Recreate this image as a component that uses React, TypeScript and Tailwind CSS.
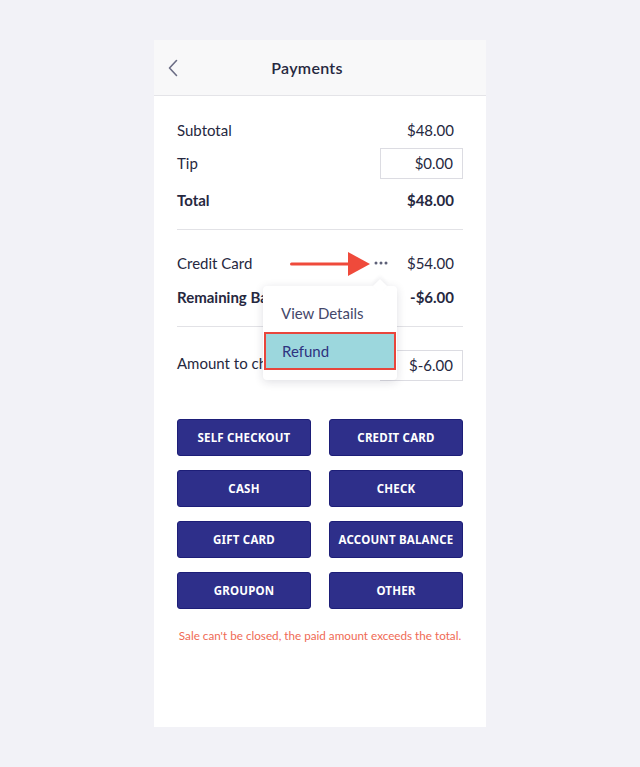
import React from "react";

const BUTTONS = [
  "SELF CHECKOUT",
  "CREDIT CARD",
  "CASH",
  "CHECK",
  "GIFT CARD",
  "ACCOUNT BALANCE",
  "GROUPON",
  "OTHER",
];

export default function App() {
  return (
    <div className="min-h-screen bg-[#f2f2f7] pt-[40px] font-['Lato','Noto_Sans',sans-serif] text-[#262840]">
      <div className="mx-auto w-[332px] h-[687px] bg-white flex flex-col">
        {/* header */}
        <div className="relative h-[56px] shrink-0 bg-[#f8f8f9] border-b border-[#e4e4e8] flex items-center justify-center pr-[26px]">
          <svg className="absolute left-[13px] top-[19px]" width="12" height="18" viewBox="0 0 12 18">
            <path d="M9.5 1.5 L2.5 9 L9.5 16.5" fill="none" stroke="#6b6d85" strokeWidth="1.6" strokeLinecap="round" strokeLinejoin="round" />
          </svg>
          <span className="text-[16px] font-semibold tracking-[0.3px]">Payments</span>
        </div>

        <div className="px-[23px] pt-[20px] flex flex-col text-[15px]">
          <div className="h-[28px] flex items-center justify-between">
            <span>Subtotal</span>
            <span className="pr-[9px]">$48.00</span>
          </div>
          <div className="mt-[4px] h-[31px] flex items-center justify-between">
            <span>Tip</span>
            <div className="w-[83px] h-[31px] border border-[#dcdce2] flex items-center justify-end pr-[9px]">$0.00</div>
          </div>
          <div className="mt-[7px] h-[28px] flex items-center justify-between font-bold">
            <span>Total</span>
            <span className="pr-[9px]">$48.00</span>
          </div>
          <div className="mt-[15px] border-t border-[#e2e2e6]" />

          <div className="relative mt-[19px] h-[28px] flex items-center justify-between">
            <span>Credit Card</span>
            <span className="pr-[9px]">$54.00</span>

            {/* annotation arrow */}
            <svg className="absolute left-[113px] top-[2px]" width="82" height="26" viewBox="0 0 82 26">
              <rect x="0" y="11.5" width="60" height="3" rx="1.5" fill="#ef4a3b" />
              <polygon points="58,1 80,13 58,25" fill="#ef4a3b" />
            </svg>
            {/* more dots */}
            <svg className="absolute left-[197px] top-[12px]" width="14" height="4" viewBox="0 0 14 4">
              <circle cx="2" cy="2" r="1.5" fill="#5d6078" />
              <circle cx="7" cy="2" r="1.5" fill="#5d6078" />
              <circle cx="12" cy="2" r="1.5" fill="#5d6078" />
            </svg>

            {/* dropdown */}
            <div className="absolute left-[86px] top-[37px] z-10 w-[134px] h-[94px] bg-white rounded-[4px] shadow-[0_2px_10px_rgba(30,30,60,0.14)]">
              <div className="absolute right-[12px] -top-[5px] w-[10px] h-[10px] bg-white rotate-45 shadow-[-2px_-2px_4px_rgba(30,30,60,0.06)]" />
              <div className="relative h-[46px] flex items-center pt-[8px] pl-[18px] text-[15px] text-[#44476a]">View Details</div>
              <div className="relative h-[38px] mx-[1px] bg-[#9cd7dd] border-2 border-[#e8463c] flex items-center pl-[16px] text-[15px] text-[#2e3380]">Refund</div>
            </div>
          </div>
          <div className="mt-[6px] h-[28px] flex items-center justify-between font-bold">
            <span>Remaining Balance</span>
            <span className="pr-[9px]">-$6.00</span>
          </div>
          <div className="mt-[15px] border-t border-[#e2e2e6]" />

          <div className="mt-[23px] h-[31px] flex items-center justify-between">
            <span className="-mt-[4px]">Amount to charge</span>
            <div className="w-[83px] h-[31px] border border-[#dcdce2] flex items-center justify-end pr-[9px]">$-6.00</div>
          </div>

          <div className="mt-[38px] grid grid-cols-2 gap-x-[18px] gap-y-[14px]">
            {BUTTONS.map((b) => (
              <button
                key={b}
                className="h-[37px] bg-[#2e2f8a] border border-[#1d1e78] rounded-[3px] text-white text-[11.5px] font-bold tracking-[0.2px] font-['Noto_Sans',sans-serif]"
              >
                {b}
              </button>
            ))}
          </div>

          <p className="mt-[16px] text-center text-[11.7px] text-[#ef6a55] leading-[20px] whitespace-nowrap">
            Sale can't be closed, the paid amount exceeds the total.
          </p>
        </div>
      </div>
    </div>
  );
}
